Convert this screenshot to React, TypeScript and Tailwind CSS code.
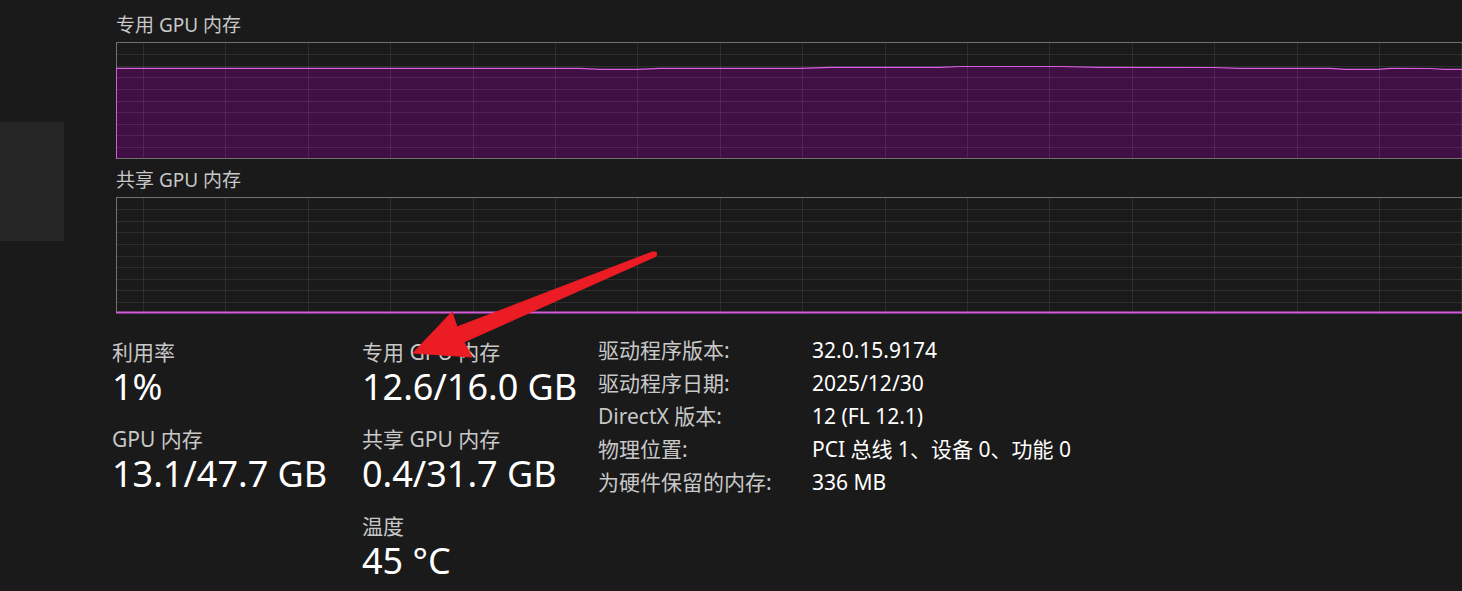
import React from 'react';

const GRID_X = Array.from({ length: 17 }, (_, i) => 27 + i * 82.4);
const GRID_Y = Array.from({ length: 9 }, (_, i) => 11.6 * (i + 1) + 0.5);

// top edge of the dedicated memory usage area (page coords)
const USAGE: [number, number][] = [
  [116, 68.3], [580, 68.3], [600, 69.3], [637, 69.3], [660, 68.3], [800, 68.3],
  [830, 67.3], [940, 67.3], [960, 66.5], [1060, 66.5], [1100, 67.3], [1214, 67.5],
  [1240, 68.3], [1330, 68.3], [1345, 69.3], [1378, 69.3], [1390, 68.3], [1430, 68.5],
  [1445, 69.3], [1520, 69.3],
];

function GridLines() {
  return (
    <g stroke="#ffffff" strokeOpacity={0.085} strokeWidth={1}>
      {GRID_X.map((x) => (
        <line key={`x${x}`} x1={Math.round(x) + 0.5} y1={0} x2={Math.round(x) + 0.5} y2={117} />
      ))}
      {GRID_Y.map((y) => (
        <line key={`y${y}`} x1={0} y1={Math.round(y) + 0.5} x2={1400} y2={Math.round(y) + 0.5} />
      ))}
    </g>
  );
}

function DedicatedGraph() {
  const pts = USAGE.map(([x, y]) => [x - 116, y - 42] as [number, number]);
  const line = pts.map(([x, y]) => `${x},${y}`).join(' ');
  const area = `0,116 ${line} 1404,116`;
  return (
    <svg width={1400} height={117} className="block">
      <polygon points={area} fill="#401044" />
      <GridLines />
      <line x1={0} y1={0.5} x2={1400} y2={0.5} stroke="#707070" />
      <line x1={0} y1={116.5} x2={1400} y2={116.5} stroke="#707070" />
      <line x1={0.5} y1={0} x2={0.5} y2={26} stroke="#707070" />
      <line x1={0.5} y1={26} x2={0.5} y2={117} stroke="#d45cdc" />
      <polyline points={line} fill="none" stroke="#d85fe0" strokeWidth={1.2} />
    </svg>
  );
}

function SharedGraph() {
  return (
    <svg width={1400} height={117} className="block">
      <GridLines />
      <line x1={0} y1={0.5} x2={1400} y2={0.5} stroke="#707070" />
      <line x1={0.5} y1={0} x2={0.5} y2={115} stroke="#707070" />
      <line x1={0} y1={115.5} x2={1400} y2={115.5} stroke="#d45cdc" strokeWidth={2} />
    </svg>
  );
}

function Stat({ label, value }: { label: string; value: string }) {
  return (
    <div>
      <div className="text-[21px] leading-[26px] text-[#c8c8c8]">{label}</div>
      <div className="text-[36px] leading-[44px] text-white">{value}</div>
    </div>
  );
}

const DETAILS: [string, string][] = [
  ['驱动程序版本:', '32.0.15.9174'],
  ['驱动程序日期:', '2025/12/30'],
  ['DirectX 版本:', '12 (FL 12.1)'],
  ['物理位置:', 'PCI 总线 1、设备 0、功能 0'],
  ['为硬件保留的内存:', '336 MB'],
];

function Arrow() {
  return (
    <svg className="pointer-events-none absolute inset-0" width={1462} height={591}>
      <polygon
        points="653,251.7 457,327 452,312 413,353 472,357 464,342 655.5,256.5"
        fill="#ec1c24"
        stroke="#ec1c24"
        strokeWidth={1}
        strokeLinejoin="round"
      />
      <circle cx={654.5} cy={254} r={2.6} fill="#ec1c24" />
    </svg>
  );
}

export default function App() {
  return (
    <div className="relative h-[591px] w-full overflow-hidden bg-[#1a1a1a] font-['Noto_Sans','Noto_Sans_CJK_SC',sans-serif] text-white">
      <div className="flex">
        <aside className="w-[64px] shrink-0 pt-[122px]">
          <div className="h-[119px] bg-[#262626]" />
        </aside>
        <main className="ml-[52px] min-w-0 flex-1">
          <div className="pt-[13px] text-[19px] leading-[24px] text-[#c8c8c8]">专用 GPU 内存</div>
          <div className="mt-[5px] overflow-hidden">
            <DedicatedGraph />
          </div>
          <div className="mt-[9px] text-[19px] leading-[24px] text-[#c8c8c8]">共享 GPU 内存</div>
          <div className="mt-[5px] overflow-hidden">
            <SharedGraph />
          </div>
          <div className="-ml-[4px] mt-[20px] flex items-start">
            <div className="flex w-[250px] flex-col gap-[17px] pt-[5px]">
              <Stat label="利用率" value="1%" />
              <Stat label="GPU 内存" value="13.1/47.7 GB" />
            </div>
            <div className="flex w-[236px] flex-col gap-[17px] pt-[5px]">
              <Stat label="专用 GPU 内存" value="12.6/16.0 GB" />
              <Stat label="共享 GPU 内存" value="0.4/31.7 GB" />
              <Stat label="温度" value="45 °C" />
            </div>
            <div className="grid grid-cols-[214px_auto] content-start text-[21px] leading-[33px]">
              {DETAILS.map(([k, v]) => (
                <React.Fragment key={k}>
                  <div className="text-[#c8c8c8]">{k}</div>
                  <div className="text-white">{v}</div>
                </React.Fragment>
              ))}
            </div>
          </div>
        </main>
      </div>
      <Arrow />
    </div>
  );
}
